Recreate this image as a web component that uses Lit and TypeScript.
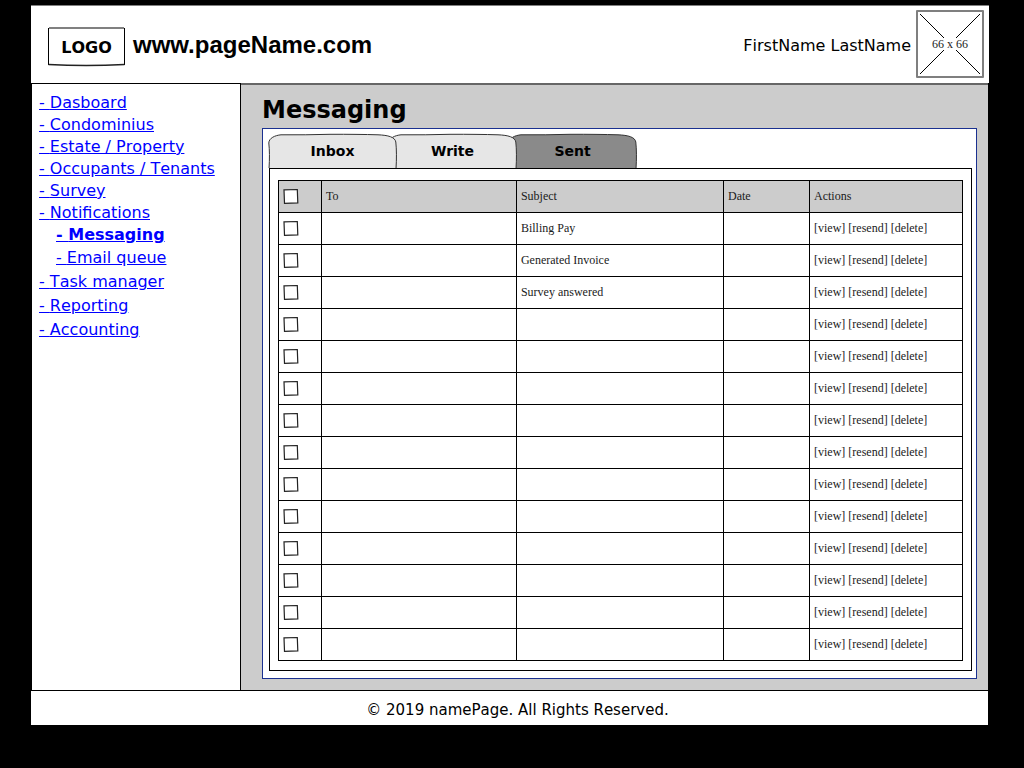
import { LitElement, html, svg, css, nothing } from "lit";
import { customElement, state } from "lit/decorators.js";
import { classMap } from "lit/directives/class-map.js";

interface NavItem {
  label: string;
  sub?: boolean;
  current?: boolean;
  roomy?: boolean;
}

interface Message {
  to: string;
  subject: string;
  date: string;
}

const NAV: NavItem[] = [
  { label: "Dasboard" },
  { label: "Condominius" },
  { label: "Estate / Property" },
  { label: "Occupants / Tenants" },
  { label: "Survey" },
  { label: "Notifications" },
  { label: "Messaging", sub: true, current: true },
  { label: "Email queue", sub: true, roomy: true },
  { label: "Task manager", roomy: true },
  { label: "Reporting", roomy: true },
  { label: "Accounting", roomy: true },
];

const TABS = ["Inbox", "Write", "Sent"];
const ROW_COUNT = 14;
const SUBJECTS = ["Billing Pay", "Generated Invoice", "Survey answered"];
const MESSAGES: Message[] = Array.from({ length: ROW_COUNT }, (_, i) => ({
  to: "",
  subject: SUBJECTS[i] ?? "",
  date: "",
}));

@customElement("site-header")
class SiteHeader extends LitElement {
  static styles = css`
    :host {
      display: block;
    }
    .bar {
      box-sizing: border-box;
      display: flex;
      align-items: center;
      min-height: 78px;
      margin-right: -1px;
      padding: 4px 5px 5px 17px;
      border-top: 1px solid #808080;
      background: #fff;
    }
    .logo {
      display: grid;
      place-items: center;
      width: 77px;
      height: 40px;
      margin-top: 6px;
      font-weight: bold;
      color: #000;
      text-decoration: none;
    }
    .logo svg,
    .logo span {
      grid-area: 1 / 1;
    }
    .logo span {
      padding-top: 2px;
    }
    .site {
      margin: 0 auto 0 8px;
      padding-top: 2px;
      font: bold 24px/28px "Liberation Sans", Arial, sans-serif;
    }
    .user {
      margin-right: 5px;
      padding-top: 4px;
    }
    .avatar {
      display: grid;
      place-items: center;
      box-sizing: border-box;
      width: 68px;
      height: 68px;
      border: 2px solid #7f7f7f;
      border-radius: 1px;
      font: 12px/14px "Liberation Serif", "Times New Roman", serif;
      color: #222;
    }
    .avatar svg,
    .avatar span {
      grid-area: 1 / 1;
    }
  `;

  render() {
    return html`
      <header class="bar">
        <a class="logo" href="#">
          <svg width="77" height="40" viewBox="0 0 77 40" fill="none" aria-hidden="true">
            <path d="M.5 1V38M76.5 1V38" stroke="#000" />
            <path d="M1 1H76" stroke="#808080" stroke-width="2" />
            <path d="M.5 37.5Q38 39.5 76.5 37.5" stroke="#222" stroke-width="1.3" />
          </svg>
          <span>LOGO</span>
        </a>
        <p class="site">www.pageName.com</p>
        <span class="user">FirstName LastName</span>
        <div class="avatar">
          <svg width="64" height="64" viewBox="0 0 64 64" stroke="#000" aria-hidden="true">
            <path d="M2 2 26 26M62 2 38 26M2 62 26 38M62 62 38 38" />
          </svg>
          <span>66 x 66</span>
        </div>
      </header>
    `;
  }
}

@customElement("side-nav")
class SideNav extends LitElement {
  static styles = css`
    :host {
      display: block;
      border: 1px solid #000;
      border-bottom: 0;
      background: #fff;
    }
    .list {
      margin: 0;
      padding: 8px 7px;
      list-style: none;
    }
    .item {
      line-height: 22px;
    }
    .roomy {
      line-height: 24px;
    }
    .sub {
      padding-left: 17px;
    }
    .link {
      color: #00f;
    }
    .current {
      font-weight: bold;
    }
  `;

  render() {
    return html`
      <nav aria-label="Main">
        <ul class="list">
          ${NAV.map(
            (n) => html`<li class=${classMap({ item: true, sub: !!n.sub, roomy: !!n.roomy })}>
              <a
                class=${classMap({ link: true, current: !!n.current })}
                href="#"
                aria-current=${n.current ? "page" : nothing}
                >- ${n.label}</a
              >
            </li>`
          )}
        </ul>
      </nav>
    `;
  }
}

@customElement("message-tabs")
class MessageTabs extends LitElement {
  static styles = css`
    :host {
      display: block;
    }
    .tabs {
      display: flex;
      margin-left: -1px;
    }
    .tab {
      display: grid;
      place-items: center;
      width: 129px;
      height: 35px;
      margin: 0;
      padding: 0;
      border: 0;
      background: none;
      color: #000;
      font: bold 14px/18px "DejaVu Sans", Verdana, sans-serif;
      cursor: pointer;
    }
    .tab + .tab {
      margin-left: -9px;
    }
    .tab:nth-child(1) {
      z-index: 3;
    }
    .tab:nth-child(2) {
      z-index: 2;
    }
    .tab svg,
    .tab span {
      grid-area: 1 / 1;
    }
    .shape {
      fill: #e6e6e6;
      stroke: #333;
    }
    .selected .shape {
      fill: #8a8a8a;
    }
  `;

  @state() selected = 2;

  render() {
    return html`
      <div class="tabs" role="tablist" aria-label="Messaging">
        ${TABS.map(
          (label, i) => html`<button
            class=${classMap({ tab: true, selected: i === this.selected })}
            type="button"
            role="tab"
            aria-selected=${i === this.selected ? "true" : "false"}
            @click=${() => (this.selected = i)}
          >
            <svg width="129" height="35" viewBox="0 0 129 35" aria-hidden="true">
              ${svg`<path class="shape" d="M1 36Q2 20 .8 10C1 5 7 2.4 13 1.8Q38 2 62 1.3Q90 1.2 110 1.8C120 2.2 127 4 127.8 9Q129 20 128 36" />`}
            </svg>
            <span>${label}</span>
          </button>`
        )}
      </div>
    `;
  }
}

@customElement("message-table")
class MessageTable extends LitElement {
  static styles = css`
    :host {
      display: block;
    }
    .table {
      width: 100%;
      border-collapse: collapse;
      table-layout: fixed;
      font: 12px/14px "Liberation Serif", "Times New Roman", serif;
      color: #1a1a1a;
    }
    .col-check {
      width: 43px;
    }
    .col-to {
      width: 28.5%;
    }
    .col-date {
      width: 86px;
    }
    .col-actions {
      width: 153px;
    }
    .cell {
      box-sizing: border-box;
      height: 32px;
      padding: 0 4px 2px;
      border: 1px solid #000;
      text-align: left;
      font-weight: normal;
      vertical-align: middle;
    }
    .head {
      background: #ccc;
    }
    .check {
      appearance: none;
      display: block;
      width: 16px;
      height: 16px;
      margin: 0;
      background: url("data:image/svg+xml,%3Csvg xmlns='http://www.w3.org/2000/svg' width='16' height='16'%3E%3Cpath d='M1 1.8 14.3 1.5 14.8 14.9 1.5 15.3Z' fill='white' stroke='%23222' stroke-width='1.2'/%3E%3C/svg%3E");
    }
    .check:checked {
      background-image: url("data:image/svg+xml,%3Csvg xmlns='http://www.w3.org/2000/svg' width='16' height='16'%3E%3Cpath d='M1 1.8 14.3 1.5 14.8 14.9 1.5 15.3Z' fill='white' stroke='%23222' stroke-width='1.2'/%3E%3Cpath d='M4 8 7 11 12 5' fill='none' stroke='black' stroke-width='2'/%3E%3C/svg%3E");
    }
    .action {
      color: inherit;
      text-decoration: none;
    }
  `;

  render() {
    return html`
      <table class="table">
        <colgroup>
          <col class="col-check" />
          <col class="col-to" />
          <col />
          <col class="col-date" />
          <col class="col-actions" />
        </colgroup>
        <thead class="head">
          <tr>
            <th class="cell" scope="col">
              <input class="check" type="checkbox" aria-label="Select all messages" />
            </th>
            <th class="cell" scope="col">To</th>
            <th class="cell" scope="col">Subject</th>
            <th class="cell" scope="col">Date</th>
            <th class="cell" scope="col">Actions</th>
          </tr>
        </thead>
        <tbody>
          ${MESSAGES.map(
            (m, i) => html`<tr>
              <td class="cell">
                <input class="check" type="checkbox" aria-label="Select message ${i + 1}" />
              </td>
              <td class="cell">${m.to}</td>
              <td class="cell">${m.subject}</td>
              <td class="cell">${m.date}</td>
              <td class="cell">
                <a class="action" href="#">[view]</a> <a class="action" href="#">[resend]</a>
                <a class="action" href="#">[delete]</a>
              </td>
            </tr>`
          )}
        </tbody>
      </table>
    `;
  }
}

@customElement("app-root")
class AppRoot extends LitElement {
  static styles = css`
    :host {
      display: block;
      box-sizing: border-box;
      min-height: 100vh;
      padding: 5px 36px 5px 31px;
      background: #000;
      color: #000;
      font: 16px/20px "DejaVu Sans", Verdana, sans-serif;
      font-kerning: none;
    }
    .body {
      display: grid;
      grid-template-columns: 210px minmax(0, 1fr);
    }
    .main {
      padding: 11px 11px 11px 21px;
      border-top: 2px solid #666;
      background: #ccc;
    }
    .title {
      margin: 0 0 4px;
      font-size: 24px;
      line-height: 28px;
    }
    .panel {
      padding: 4px 4px 7px 6px;
      border: 1px solid #1a3090;
      background: #fff;
    }
    .sheet {
      padding: 11px 8px 9px;
      border: 1px solid #000;
    }
    .footer {
      padding: 9px 0 5px 16px;
      border-top: 1px solid #000;
      background: #fff;
      font-size: 15px;
      text-align: center;
    }
  `;

  render() {
    return html`
      <site-header></site-header>
      <div class="body">
        <side-nav></side-nav>
        <main class="main">
          <h1 class="title">Messaging</h1>
          <section class="panel">
            <message-tabs></message-tabs>
            <div class="sheet">
              <message-table></message-table>
            </div>
          </section>
        </main>
      </div>
      <footer class="footer">© 2019 namePage. All Rights Reserved.</footer>
    `;
  }
}
